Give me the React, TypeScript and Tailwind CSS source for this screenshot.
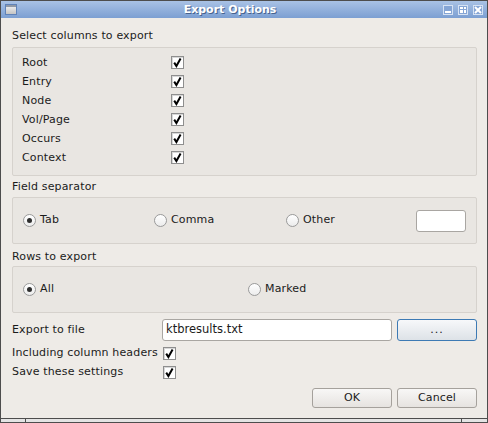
import React from "react";

const font = "font-['DejaVu_Sans',_'Liberation_Sans',_sans-serif]";

function Check() {
  return (
    <div className="w-[13px] h-[13px] border border-[#8e8e8e] bg-white shadow-[inset_1px_1px_0_#d8d8d8] flex items-center justify-center shrink-0">
      <svg width="11" height="11" viewBox="0 0 11 11">
        <path d="M2.2 5.6 L4.4 9 L8.6 1.6" fill="none" stroke="#000" strokeWidth="2" strokeLinejoin="miter" />
      </svg>
    </div>
  );
}

function Radio({ on }: { on?: boolean }) {
  return (
    <div className="w-[13px] h-[13px] rounded-full border border-[#9a9a9a] bg-gradient-to-b from-[#ffffff] to-[#ececec] flex items-center justify-center shrink-0">
      {on && <div className="w-[5px] h-[5px] rounded-full bg-[#2e2e2e]" />}
    </div>
  );
}

function Group({ children, className }: { children: React.ReactNode; className?: string }) {
  return (
    <div className={"border border-[#d6d2cd] rounded-[2px] bg-[#e9e6e2] " + (className ?? "")}>{children}</div>
  );
}

function Btn({ children, primary }: { children: React.ReactNode; primary?: boolean }) {
  return (
    <div
      className={
        "w-[80px] flex items-center justify-center rounded-[3px] border " +
        (primary
          ? "border-[#3d7ab4] bg-gradient-to-b from-[#f7f8fa] to-[#dde2e7]"
          : "border-[#a5a19c] bg-gradient-to-b from-[#f8f7f6] to-[#e6e3e0]")
      }
    >
      {children}
    </div>
  );
}

export default function App() {
  const cols = ["Root", "Entry", "Node", "Vol/Page", "Occurs", "Context"];
  return (
    <div className={"w-[488px] h-[423px] border border-[#4d4d4d] flex flex-col text-[11px] text-[#1b1b1b] " + font}>
      {/* title bar */}
      <div className="h-[17px] bg-gradient-to-b from-[#a9c2e5] to-[#7c9fd2] flex items-center pl-[4px] pr-[4px]">
        <div className="w-[12px] h-[11px] border border-[#5f82b8] bg-gradient-to-b from-[#f4f4f4] to-[#c4c4c4] flex flex-col">
          <div className="h-[2px] bg-[#8f98a6]" />
        </div>
        <div className="flex-1 text-center text-white font-bold text-[11px] leading-[13px] [text-shadow:1px_1px_0_#46628e]">
          Export Options
        </div>
        <div className="flex items-center gap-[5px]">
          <div className="w-[10px] h-[10px] border border-[#d6e2f3] bg-[#85a5d5] flex items-end justify-center pb-[1px]">
            <div className="w-[6px] h-[2px] bg-white" />
          </div>
          <div className="w-[10px] h-[10px] border border-[#d6e2f3] bg-[#85a5d5] grid grid-cols-2 gap-[1px] p-[1px]">
            <div className="bg-white" />
            <div className="bg-white" />
            <div className="bg-white" />
            <div className="bg-white" />
          </div>
          <div className="w-[10px] h-[10px] border border-[#d6e2f3] bg-[#85a5d5] flex items-center justify-center">
            <svg width="8" height="8" viewBox="0 0 8 8">
              <path d="M1 1 L7 7 M7 1 L1 7" stroke="#fff" strokeWidth="2" />
            </svg>
          </div>
        </div>
      </div>

      {/* body */}
      <div className="flex-1 bg-[#eeebe7] pl-[11px] pr-[10px] pt-[11px] flex flex-col tracking-[0.15px]">
        <div className="h-[13px] leading-[13px]">Select columns to export</div>
        <Group className="mt-[5px] pt-[5px] pb-[8px] pl-[9px]">
          {cols.map((c) => (
            <div key={c} className="h-[19px] flex items-center">
              <div className="w-[149px] leading-[13px]">{c}</div>
              <Check />
            </div>
          ))}
        </Group>

        <div className="mt-[4px] h-[13px] leading-[13px]">Field separator</div>
        <Group className="mt-[4px] h-[47px] flex items-center pl-[10px] pr-[10px]">
          <div className="w-[131px] flex items-center gap-[4px]">
            <Radio on />
            <span>Tab</span>
          </div>
          <div className="w-[132px] flex items-center gap-[4px]">
            <Radio />
            <span>Comma</span>
          </div>
          <div className="flex-1 flex items-center gap-[4px]">
            <Radio />
            <span>Other</span>
          </div>
          <div className="w-[50px] h-[22px] border border-[#a9a6a2] rounded-[3px] bg-white" />
        </Group>

        <div className="mt-[6px] h-[13px] leading-[13px]">Rows to export</div>
        <Group className="mt-[3px] h-[47px] flex items-center pl-[10px]">
          <div className="w-[225px] flex items-center gap-[4px]">
            <Radio on />
            <span>All</span>
          </div>
          <div className="flex items-center gap-[4px]">
            <Radio />
            <span>Marked</span>
          </div>
        </Group>

        <div className="mt-[6px] h-[22px] flex">
          <div className="w-[150px] flex items-center">Export to file</div>
          <div className="flex-1 border border-[#a9a6a2] rounded-[3px] bg-white flex items-center pl-[3px] text-[11.5px] tracking-normal">
            ktbresults.txt
          </div>
          <div className="w-[5px]" />
          <Btn primary>
            <span className="tracking-[1px]">...</span>
          </Btn>
        </div>

        <div className="mt-[3px] h-[19px] flex items-center">
          <div className="w-[150px]">Including column headers</div>
          <div className="ml-[1px]">
            <Check />
          </div>
        </div>
        <div className="h-[19px] flex items-center">
          <div className="w-[150px]">Save these settings</div>
          <div className="ml-[1px]">
            <Check />
          </div>
        </div>

        <div className="mt-[6px] h-[20px] flex justify-end gap-[5px]">
          <Btn>OK</Btn>
          <Btn>Cancel</Btn>
        </div>
      </div>

      {/* bottom resize strip */}
      <div className="h-[4px] border-t border-[#4d4d4d] bg-[#e4e4e4] flex">
        <div className="w-[25px] border-r border-[#4d4d4d]" />
        <div className="flex-1 border-r border-[#4d4d4d]" />
        <div className="w-[25px]" />
      </div>
    </div>
  );
}
